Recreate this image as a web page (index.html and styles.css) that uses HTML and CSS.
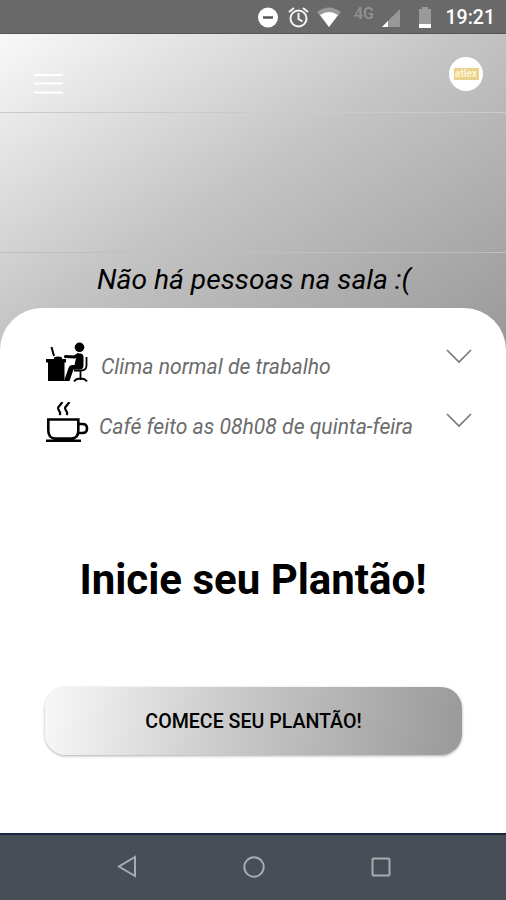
FILE: index.html
```html
<!DOCTYPE html>
<html lang="pt-BR">
<head>
<meta charset="utf-8">
<title>Plantão</title>
<link rel="stylesheet" href="styles.css">
</head>
<body>
<div class="phone">
  <header class="status">
    <svg class="status-icons" width="190" height="34" viewBox="0 0 190 34">
      <circle cx="22" cy="17.500" r="10" fill="#fff"/><path d="M17 17.500h10" stroke="#555" stroke-width="2.500"/>
      <g fill="none" stroke="#f5f5f5" stroke-width="2"><circle cx="52.500" cy="18.500" r="8"/><path d="M52.500 13v6l4 2.500M43 12l5-4M62 12l-5-4"/></g>
      <path d="M71 12Q83 3 95 12L83 27z" fill="#999"/><path d="M74 15Q83 9 92 15L83 27z" fill="#fff"/>
      <path d="M154 9v18h-18z" fill="#989898"/><path d="M142 21v6h-6z" fill="#fff"/>
      <path d="M173 9h3V7h6v2h3v15h-12z" fill="#999"/><path d="M173 24h12v4h-12z" fill="#fff"/>
      <text x="108" y="19" class="network">4G</text>
    </svg>
    <span class="clock">19:21</span>
  </header>
  <main class="room">
    <nav class="appbar">
      <svg width="30" height="22" viewBox="0 0 30 22"><path d="M0 2h29M0 10.500h29M0 19.500h29" stroke="#fff" stroke-width="2"/></svg>
      <div class="avatar"><span>atlex</span></div>
    </nav>
    <section class="people"></section>
    <p class="empty"><span>Não há pessoas na sala :(</span></p>
    <section class="sheet">
      <div class="row climate">
        <svg class="row-icon" width="44" height="42" viewBox="0 0 44 42">
          <path d="M1 17h20v3.500h-1.500V39H3V20.500H1z"/><path d="M6.500 5l2.500 9" fill="none" stroke="#000" stroke-width="2"/><path d="M9 15.500q4-2 8 0v2H9z"/>
          <circle cx="34.500" cy="5.300" r="4.800"/>
          <path d="M20.500 14.500l9 .5 3.500-2" fill="none" stroke="#000" stroke-width="3.200" stroke-linecap="round"/>
          <path d="M32 11.500h3q3.500 0 3.500 4v8q0 4-4 4h-6l-4 11.500h-5.500l4.500-13q1-3 4-3h2z"/>
          <path d="M41.500 15v8.500q0 5-5.500 5h-7M35.500 29v9M29 39.500q2-3 6.500-3t6.500 3" fill="none" stroke="#000" stroke-width="1.800"/>
        </svg>
        <span class="label">Clima normal de trabalho</span>
        <svg class="chevron" width="26" height="15" viewBox="0 0 26 15"><path d="M1 1l12 12L25 1"/></svg>
      </div>
      <div class="row coffee">
        <svg class="row-icon" width="44" height="42" viewBox="0 0 44 42" fill="none" stroke="#000" stroke-width="2.600">
          <path d="M3.300 17.500h30v11q0 8-7 8h-16q-7 0-7-8zM33.300 22h4.200q4.500 0 4.500 4.500T37.500 31h-4.200M1 38.800h35"/><path d="M17.500 0l-4 5q-.8 1 0 2.500l1.500 3q.5 1-.5 2.500M24.500 0l-4 5q-.8 1 0 2.500l1.500 3q.5 1-.5 2.500" stroke-width="2.200"/>
        </svg>
        <span class="label">Café feito as 08h08 de quinta-feira</span>
        <svg class="chevron" width="26" height="15" viewBox="0 0 26 15"><path d="M1 1l12 12L25 1"/></svg>
      </div>
      <h1><span>Inicie seu Plantão!</span></h1>
      <button class="start"><span>COMECE SEU PLANTÃO!</span></button>
    </section>
  </main>
  <footer class="navbar">
    <svg width="22" height="24" viewBox="0 0 22 24"><path d="M19 2v19L3 11.500z"/></svg>
    <svg width="24" height="24" viewBox="0 0 24 24"><circle cx="12" cy="12" r="9.700"/></svg>
    <svg width="22" height="24" viewBox="0 0 22 24"><rect x="2.500" y="3.500" width="17" height="17" rx="1"/></svg>
  </footer>
</div>
</body>
</html>
```
FILE: styles.css
```css
* { box-sizing: border-box; }
body { margin: 0; font-family: Roboto, sans-serif; color: #000; }
.phone { width: 506px; height: 900px; display: flex; flex-direction: column; overflow: hidden; background: #fff; }
.status { height: 34px; flex: none; display: flex; align-items: center; justify-content: flex-end; background: #696969; border-bottom: 1px solid #555; padding-right: 11px; }
.status-icons { margin-right: 10px; }
.network { font: 500 16px Roboto, sans-serif; fill: #929292; }
.clock { color: #fff; font-size: 19.500px; font-weight: 500; line-height: 34px; padding-top: 3px; }
.room { flex: 1; display: flex; flex-direction: column; background: linear-gradient(to bottom right, #f9f9f9 0, #c4c4c4 47%, #989898 100%) top / 100% 320px no-repeat; }
.appbar { height: 79px; padding: 2px 23px 0 34px; display: flex; align-items: center; justify-content: space-between; border-bottom: 1px solid #cacaca; }
.appbar svg { margin-top: 19px; }
.avatar { width: 34px; height: 34px; border-radius: 50%; background: #fff; display: grid; place-items: center; }
.avatar span { width: 25px; height: 12px; background: #ead18d; color: #fff4d2; font-size: 10px; font-weight: 700; line-height: 12px; text-align: center; }
.people { height: 140px; border-bottom: 1px solid #bfbfbf; }
.empty { margin: 0; height: 55px; padding-left: 2px; text-align: center; font-size: 28.200px; font-style: italic; line-height: 54px; white-space: nowrap; }
.sheet { flex: 1; border-radius: 42px 42px 0 0; background: #fff; padding: 34px 34px 0 45px; display: flex; flex-direction: column; }
.row { height: 60px; display: flex; align-items: flex-start; }
.row-icon { flex: none; }
.label { flex: 1; font-size: 21.150px; font-style: italic; font-weight: 400; line-height: 24px; color: #6c6c6c; padding-top: 13px; white-space: nowrap; }
.climate .label { padding-left: 12px; }
.coffee .label { padding-left: 10px; }
.chevron { margin-top: 7px; fill: none; stroke: #777; stroke-width: 1.600; }
.coffee .chevron { margin-top: 11px; }
h1 { margin: 90px 0 0 -11px; height: 70px; font-size: 42px; font-weight: 700; line-height: 56px; text-align: center; white-space: nowrap; }
.start { margin-top: 65px; width: 417px; height: 68px; border: 0; border-radius: 21px; background: linear-gradient(100deg, #f8f8f8, #c9c9c9 45%, #999); box-shadow: 0 1px 3px #0005; font: 500 19.600px Roboto, sans-serif; color: #000; white-space: nowrap; }
.navbar { height: 67px; flex: none; background: #474e56; border-top: 2px solid #15253c; padding: 0 0 1px 1px; display: flex; justify-content: center; align-items: center; gap: 104px; }
.navbar svg { fill: none; stroke: #a5abb0; stroke-width: 2; }
```
